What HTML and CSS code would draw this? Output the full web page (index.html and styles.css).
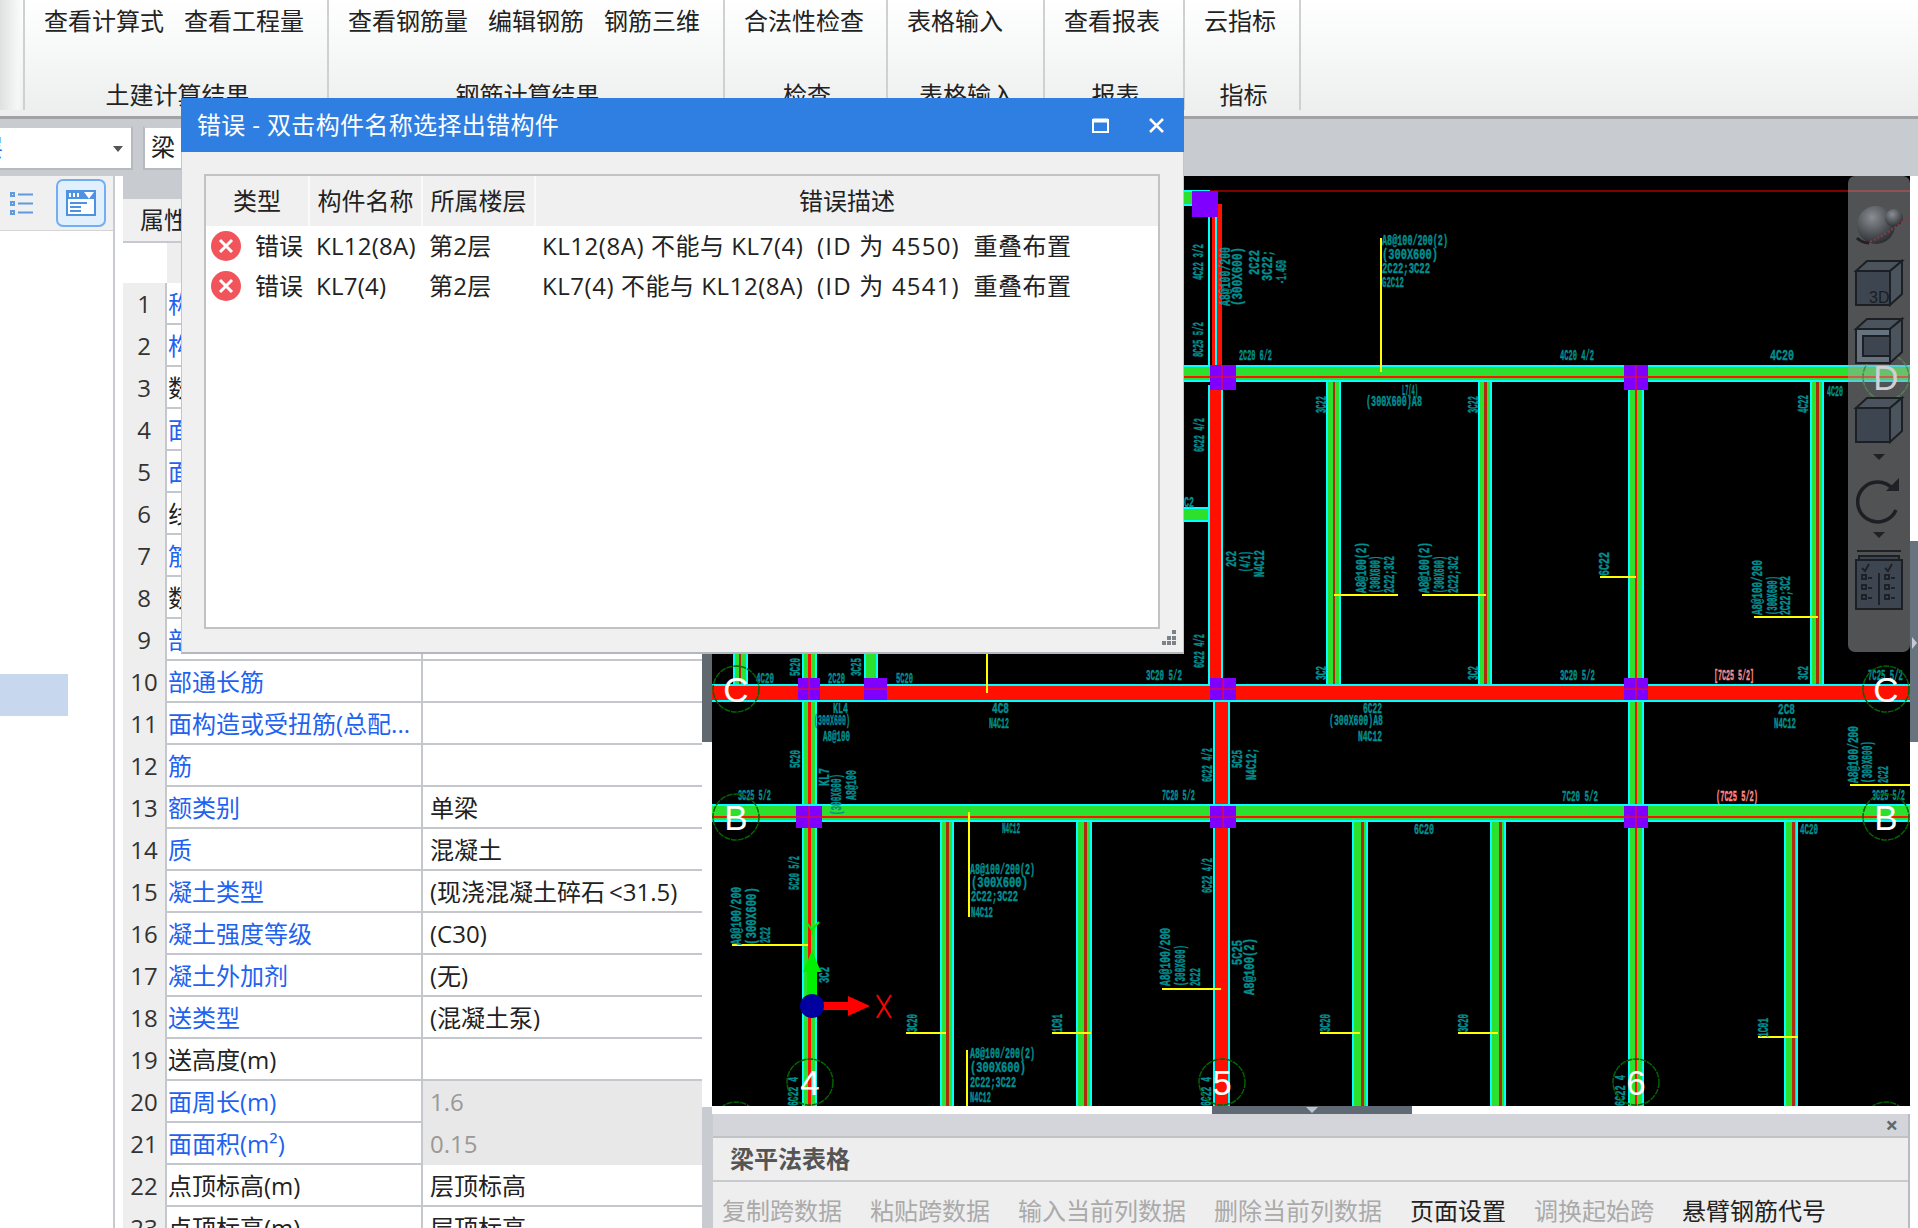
FILE: index.html
```html
<!DOCTYPE html>
<html lang="zh">
<head>
<meta charset="utf-8">
<title>错误 - 双击构件名称选择出错构件</title>
<link rel="stylesheet" href="styles.css">
</head>
<body>
<div class="app">
  <header class="ribbon">
    <div class="rgroup stub"></div>
    <div class="rgroup w1"><div class="rbtns"><span>查看计算式</span><span>查看工程量</span></div><div class="rlabel">土建计算结果</div></div>
    <div class="rgroup w2"><div class="rbtns"><span>查看钢筋量</span><span>编辑钢筋</span><span>钢筋三维</span></div><div class="rlabel">钢筋计算结果</div></div>
    <div class="rgroup w3"><div class="rbtns"><span>合法性检查</span></div><div class="rlabel">检查</div></div>
    <div class="rgroup w4"><div class="rbtns"><span>表格输入</span></div><div class="rlabel">表格输入</div></div>
    <div class="rgroup w5"><div class="rbtns"><span>查看报表</span></div><div class="rlabel">报表</div></div>
    <div class="rgroup w6"><div class="rbtns"><span>云指标</span></div><div class="rlabel">指标</div></div>
    <div class="rgroup rest"></div>
  </header>

  <div class="subbar">
    <div class="combo first"><span class="combo-text">层</span><span class="combo-arrow"></span></div>
    <div class="combo second">梁</div>
  </div>

  <main class="workspace">
    <aside class="tree">
      <div class="tree-tools">
        <svg class="ic-list" width="24" height="24" viewBox="0 0 24 24"><g class="ic-stroke"><rect x="1" y="2" width="3" height="3"/><rect x="1" y="11" width="3" height="3"/><rect x="1" y="20" width="3" height="3"/><path d="M8 3.5h15M8 12.5h15M8 21.5h15"/></g></svg>
        <div class="tool-on">
          <svg width="30" height="26" viewBox="0 0 30 26"><rect class="ic-fill" x="0" y="0" width="30" height="26"/><rect class="ic-white" x="2" y="9" width="26" height="15"/><path class="ic-whiteline" d="M4 3v4M8 3v4M12 3v4M20 3h6l-3 4z"/><path class="ic-blueline" d="M4 13h17M4 17h11M4 21h11"/></svg>
        </div>
      </div>
      <div class="tree-body"><div class="tree-sel"></div></div>
    </aside>
    <div class="tree-gap"></div>

    <section class="props">
      <div class="props-band"></div>
      <div class="props-head">属性</div>
      <div class="row headrow"><div class="num"></div><div class="name"></div><div class="val"></div></div>
      <div class="row"><div class="num">1</div><div class="name link">称</div><div class="val"></div></div>
      <div class="row"><div class="num">2</div><div class="name link">构</div><div class="val"></div></div>
      <div class="row"><div class="num">3</div><div class="name">数</div><div class="val"></div></div>
      <div class="row"><div class="num">4</div><div class="name link">面</div><div class="val"></div></div>
      <div class="row"><div class="num">5</div><div class="name link">面</div><div class="val"></div></div>
      <div class="row"><div class="num">6</div><div class="name">线</div><div class="val"></div></div>
      <div class="row"><div class="num">7</div><div class="name link">筋</div><div class="val"></div></div>
      <div class="row"><div class="num">8</div><div class="name">数</div><div class="val"></div></div>
      <div class="row"><div class="num">9</div><div class="name link">部</div><div class="val"></div></div>
      <div class="row"><div class="num">10</div><div class="name link">部通长筋</div><div class="val"></div></div>
      <div class="row"><div class="num">11</div><div class="name link">面构造或受扭筋(总配...</div><div class="val"></div></div>
      <div class="row"><div class="num">12</div><div class="name link">筋</div><div class="val"></div></div>
      <div class="row"><div class="num">13</div><div class="name link">额类别</div><div class="val">单梁</div></div>
      <div class="row"><div class="num">14</div><div class="name link">质</div><div class="val">混凝土</div></div>
      <div class="row"><div class="num">15</div><div class="name link">凝土类型</div><div class="val">(现浇混凝土碎石&thinsp;&lt;31.5)</div></div>
      <div class="row"><div class="num">16</div><div class="name link">凝土强度等级</div><div class="val">(C30)</div></div>
      <div class="row"><div class="num">17</div><div class="name link">凝土外加剂</div><div class="val">(无)</div></div>
      <div class="row"><div class="num">18</div><div class="name link">送类型</div><div class="val">(混凝土泵)</div></div>
      <div class="row"><div class="num">19</div><div class="name">送高度(m)</div><div class="val"></div></div>
      <div class="row"><div class="num">20</div><div class="name link">面周长(m)</div><div class="val off">1.6</div></div>
      <div class="row"><div class="num">21</div><div class="name link">面面积(m²)</div><div class="val off">0.15</div></div>
      <div class="row"><div class="num">22</div><div class="name">点顶标高(m)</div><div class="val">层顶标高</div></div>
      <div class="row"><div class="num">23</div><div class="name">点顶标高(m)</div><div class="val">层顶标高</div></div>
    </section>

    <div class="vscroll"><div class="vthumb"></div></div>

    <section class="viewcol">
      <div class="viewrow">
        <div class="canvas">
          <svg class="cad" width="1198" height="930" viewBox="712 176 1198 930">
            <!-- top edge -->
            <rect class="dred" x="1210" y="190" width="700" height="2"/>
            <rect class="c" x="1184" y="190" width="26" height="2"/>
            <rect class="g" x="1184" y="192" width="8" height="13"/>
            <rect class="c" x="1184" y="204" width="24" height="2"/>

            <!-- secondary beams -->
            <g>
              <rect class="c" x="1326" y="381" width="15" height="303"/><rect class="g" x="1328" y="381" width="11" height="303"/><rect class="rd" x="1333" y="381" width="2" height="303"/>
              <rect class="c" x="1478" y="381" width="14" height="303"/><rect class="g" x="1480" y="381" width="10" height="303"/><rect class="rd" x="1484" y="381" width="3" height="303"/>
              <rect class="c" x="1810" y="381" width="14" height="303"/><rect class="g" x="1812" y="381" width="10" height="303"/><rect class="rd" x="1816" y="381" width="3" height="303"/>
              <rect class="c" x="733" y="653" width="15" height="31"/><rect class="g" x="735" y="653" width="11" height="31"/><rect class="rd" x="739" y="653" width="2" height="31"/>
              <rect class="c" x="864" y="653" width="14" height="31"/><rect class="g" x="866" y="653" width="10" height="31"/>
              <rect class="c" x="940" y="822" width="14" height="284"/><rect class="g" x="942" y="822" width="10" height="284"/><rect class="rd" x="946" y="822" width="3" height="284"/>
              <rect class="c" x="1076" y="822" width="16" height="284"/><rect class="g" x="1078" y="822" width="12" height="284"/><rect class="rd" x="1084" y="822" width="3" height="284"/>
              <rect class="c" x="1352" y="822" width="16" height="284"/><rect class="g" x="1354" y="822" width="12" height="284"/><rect class="rd" x="1361" y="822" width="3" height="284"/>
              <rect class="c" x="1490" y="822" width="16" height="284"/><rect class="g" x="1492" y="822" width="12" height="284"/><rect class="rd" x="1499" y="822" width="3" height="284"/>
              <rect class="c" x="1784" y="822" width="14" height="284"/><rect class="g" x="1786" y="822" width="10" height="284"/><rect class="rd" x="1792" y="822" width="3" height="284"/>
            </g>

            <!-- axis 4 and 6 -->
            <rect class="c" x="802" y="653" width="15" height="453"/><rect class="g" x="804" y="653" width="11" height="453"/><rect class="r" x="808" y="653" width="3" height="453"/>
            <rect class="c" x="1628" y="385" width="16" height="721"/><rect class="g" x="1630" y="385" width="12" height="721"/><rect class="r" x="1635" y="385" width="2" height="721"/>

            <!-- axis 5 -->
            <rect class="c" x="1208" y="217" width="2" height="148"/><rect class="r" x="1212" y="204" width="3" height="161"/><rect class="c" x="1215" y="217" width="2" height="148"/><rect class="r" x="1217" y="204" width="5" height="161"/>
            <rect class="g" x="1184" y="509" width="26" height="12"/>
            <rect class="c" x="1184" y="507" width="39" height="2"/><rect class="c" x="1184" y="520" width="39" height="2"/>
            <rect class="c" x="1208" y="385" width="15" height="299"/><rect class="r" x="1210" y="385" width="11" height="299"/>
            <rect class="c" x="1213" y="700" width="17" height="406"/><rect class="r" x="1215" y="700" width="13" height="406"/>

            <!-- main horizontals -->
            <rect class="c" x="1184" y="365" width="726" height="17"/><rect class="g" x="1184" y="367" width="726" height="13"/><rect class="r" x="1184" y="376" width="726" height="2"/>
            <rect class="c" x="712" y="684" width="1198" height="18"/><rect class="r" x="712" y="686" width="1198" height="14"/>
            <rect class="c" x="712" y="804" width="1198" height="18"/><rect class="g" x="712" y="806" width="1198" height="14"/><rect class="r" x="712" y="816" width="1198" height="2"/>

            <!-- columns -->
            <rect class="p" x="1192" y="191" width="26" height="26"/>
            <rect class="p" x="1210" y="365" width="26" height="25"/><rect class="p" x="1624" y="365" width="24" height="25"/>
            <rect class="p" x="798" y="678" width="22" height="22"/><rect class="p" x="864" y="678" width="23" height="22"/><rect class="p" x="1210" y="678" width="26" height="22"/><rect class="p" x="1624" y="678" width="24" height="22"/>
            <rect class="p" x="796" y="806" width="26" height="22"/><rect class="p" x="1210" y="806" width="26" height="22"/><rect class="p" x="1624" y="806" width="24" height="22"/>
            <path class="cross" d="M1210 377h26M1222 365v25M1624 377h24M1636 365v25M798 689h22M809 678v22M864 689h23M1210 689h26M1223 678v22M1624 689h24M1636 678v22M796 817h26M809 806v22M1210 817h26M1223 806v22M1624 817h24M1636 806v22"/>

            <!-- leaders -->
            <path class="leader" d="M1381 238V372M1334 595H1398M1422 595H1486M1600 577H1636M1754 617H1818M987 653V693M969 812V917M732 945H808M967 1050V1106M906 1033H946M1052 1033H1091M1162 989H1221M1320 1033H1360M1458 1033H1498M1758 1037H1798M1850 785H1910"/>

            <!-- labels, horizontal -->
            <g class="t">
              <text x="1382" y="245" textLength="66" lengthAdjust="spacingAndGlyphs">A8@100/200(2)</text>
              <text x="1382" y="259" textLength="56" lengthAdjust="spacingAndGlyphs">(300X600)</text>
              <text x="1382" y="273" textLength="48" lengthAdjust="spacingAndGlyphs">2C22;3C22</text>
              <text x="1382" y="287" textLength="22" lengthAdjust="spacingAndGlyphs">G2C12</text>
              <text x="1239" y="360" textLength="33" lengthAdjust="spacingAndGlyphs">2C20 6/2</text>
              <text x="1560" y="360" textLength="34" lengthAdjust="spacingAndGlyphs">4C20 4/2</text>
              <text x="1770" y="360" textLength="24" lengthAdjust="spacingAndGlyphs">4C20</text>
              <text x="1402" y="395" textLength="16" lengthAdjust="spacingAndGlyphs">L7(4)</text>
              <text x="1366" y="406" textLength="56" lengthAdjust="spacingAndGlyphs">(300X600)A8</text>
              <text x="1827" y="396" textLength="16" lengthAdjust="spacingAndGlyphs">4C20</text>
              <text x="1184" y="507" textLength="10" lengthAdjust="spacingAndGlyphs">C2</text>
              <text x="756" y="683" textLength="18" lengthAdjust="spacingAndGlyphs">4C20</text>
              <text x="828" y="683" textLength="17" lengthAdjust="spacingAndGlyphs">2C20</text>
              <text x="896" y="683" textLength="17" lengthAdjust="spacingAndGlyphs">5C20</text>
              <text x="1146" y="680" textLength="36" lengthAdjust="spacingAndGlyphs">3C20 5/2</text>
              <text x="1560" y="680" textLength="35" lengthAdjust="spacingAndGlyphs">3C20 5/2</text>
              <text x="1868" y="680" textLength="35" lengthAdjust="spacingAndGlyphs">7C25 5/2</text>
              <text x="833" y="713" textLength="15" lengthAdjust="spacingAndGlyphs">KL4</text>
              <text x="814" y="725" textLength="36" lengthAdjust="spacingAndGlyphs">(300X600)</text>
              <text x="823" y="741" textLength="27" lengthAdjust="spacingAndGlyphs">A8@100</text>
              <text x="992" y="713" textLength="17" lengthAdjust="spacingAndGlyphs">4C8</text>
              <text x="989" y="728" textLength="20" lengthAdjust="spacingAndGlyphs">N4C12</text>
              <text x="1363" y="713" textLength="19" lengthAdjust="spacingAndGlyphs">6C22</text>
              <text x="1329" y="725" textLength="54" lengthAdjust="spacingAndGlyphs">(300X600)A8</text>
              <text x="1358" y="741" textLength="24" lengthAdjust="spacingAndGlyphs">N4C12</text>
              <text x="1778" y="714" textLength="17" lengthAdjust="spacingAndGlyphs">2C8</text>
              <text x="1774" y="728" textLength="22" lengthAdjust="spacingAndGlyphs">N4C12</text>
              <text x="738" y="800" textLength="33" lengthAdjust="spacingAndGlyphs">3C25 5/2</text>
              <text x="1162" y="800" textLength="33" lengthAdjust="spacingAndGlyphs">7C20 5/2</text>
              <text x="1562" y="801" textLength="36" lengthAdjust="spacingAndGlyphs">7C20 5/2</text>
              <text x="1872" y="800" textLength="33" lengthAdjust="spacingAndGlyphs">3C25 5/2</text>
              <text x="1002" y="833" textLength="18" lengthAdjust="spacingAndGlyphs">N4C12</text>
              <text x="1414" y="834" textLength="20" lengthAdjust="spacingAndGlyphs">6C20</text>
              <text x="1800" y="834" textLength="18" lengthAdjust="spacingAndGlyphs">4C20</text>
              <text x="970" y="874" textLength="65" lengthAdjust="spacingAndGlyphs">A8@100/200(2)</text>
              <text x="971" y="887" textLength="57" lengthAdjust="spacingAndGlyphs">(300X600)</text>
              <text x="971" y="901" textLength="47" lengthAdjust="spacingAndGlyphs">2C22;3C22</text>
              <text x="971" y="917" textLength="22" lengthAdjust="spacingAndGlyphs">N4C12</text>
              <text x="970" y="1058" textLength="65" lengthAdjust="spacingAndGlyphs">A8@100/200(2)</text>
              <text x="970" y="1072" textLength="56" lengthAdjust="spacingAndGlyphs">(300X600)</text>
              <text x="970" y="1087" textLength="46" lengthAdjust="spacingAndGlyphs">2C22;3C22</text>
              <text x="970" y="1102" textLength="21" lengthAdjust="spacingAndGlyphs">N4C12</text>
            </g>
            <g class="tp">
              <text x="1714" y="680" textLength="40" lengthAdjust="spacingAndGlyphs">[7C25 5/2]</text>
              <text x="1716" y="801" textLength="42" lengthAdjust="spacingAndGlyphs">(7C25 5/2)</text>
            </g>

            <!-- labels, rotated -->
            <g class="t">
              <text transform="translate(1203 280) rotate(-90)" textLength="36" lengthAdjust="spacingAndGlyphs">4C22 3/2</text>
              <text transform="translate(1203 357) rotate(-90)" textLength="35" lengthAdjust="spacingAndGlyphs">8C25 5/2</text>
              <text transform="translate(1230 306) rotate(-90)" textLength="59" lengthAdjust="spacingAndGlyphs">A8@100/200</text>
              <text transform="translate(1242 306) rotate(-90)" textLength="59" lengthAdjust="spacingAndGlyphs">(300X600)</text>
              <text transform="translate(1259 275) rotate(-90)" textLength="25" lengthAdjust="spacingAndGlyphs">2C22</text>
              <text transform="translate(1272 281) rotate(-90)" textLength="31" lengthAdjust="spacingAndGlyphs">3C22;</text>
              <text transform="translate(1286 284) rotate(-90)" textLength="24" lengthAdjust="spacingAndGlyphs">-1.450</text>
              <text transform="translate(1326 413) rotate(-90)" textLength="17" lengthAdjust="spacingAndGlyphs">3C22</text>
              <text transform="translate(1478 413) rotate(-90)" textLength="17" lengthAdjust="spacingAndGlyphs">3C22</text>
              <text transform="translate(1808 413) rotate(-90)" textLength="18" lengthAdjust="spacingAndGlyphs">4C22</text>
              <text transform="translate(1204 452) rotate(-90)" textLength="34" lengthAdjust="spacingAndGlyphs">6C22 4/2</text>
              <text transform="translate(1204 668) rotate(-90)" textLength="34" lengthAdjust="spacingAndGlyphs">6C22 4/2</text>
              <text transform="translate(1236 567) rotate(-90)" textLength="16" lengthAdjust="spacingAndGlyphs">2C2</text>
              <text transform="translate(1250 572) rotate(-90)" textLength="21" lengthAdjust="spacingAndGlyphs">(4/1)</text>
              <text transform="translate(1264 577) rotate(-90)" textLength="27" lengthAdjust="spacingAndGlyphs">N4C12</text>
              <text transform="translate(1366 593) rotate(-90)" textLength="51" lengthAdjust="spacingAndGlyphs">A8@100(2)</text>
              <text transform="translate(1380 593) rotate(-90)" textLength="37" lengthAdjust="spacingAndGlyphs">(300X600)</text>
              <text transform="translate(1394 593) rotate(-90)" textLength="37" lengthAdjust="spacingAndGlyphs">2C22;3C2</text>
              <text transform="translate(1429 593) rotate(-90)" textLength="51" lengthAdjust="spacingAndGlyphs">A8@100(2)</text>
              <text transform="translate(1444 593) rotate(-90)" textLength="37" lengthAdjust="spacingAndGlyphs">(300X600)</text>
              <text transform="translate(1458 593) rotate(-90)" textLength="37" lengthAdjust="spacingAndGlyphs">2C22;3C2</text>
              <text transform="translate(1609 576) rotate(-90)" textLength="24" lengthAdjust="spacingAndGlyphs">6C22</text>
              <text transform="translate(1762 615) rotate(-90)" textLength="55" lengthAdjust="spacingAndGlyphs">A8@100/200</text>
              <text transform="translate(1777 615) rotate(-90)" textLength="39" lengthAdjust="spacingAndGlyphs">(300X600)</text>
              <text transform="translate(1790 615) rotate(-90)" textLength="39" lengthAdjust="spacingAndGlyphs">2C22;3C2</text>
              <text transform="translate(1326 680) rotate(-90)" textLength="14" lengthAdjust="spacingAndGlyphs">3C2</text>
              <text transform="translate(1478 680) rotate(-90)" textLength="14" lengthAdjust="spacingAndGlyphs">3C2</text>
              <text transform="translate(1808 680) rotate(-90)" textLength="14" lengthAdjust="spacingAndGlyphs">3C2</text>
              <text transform="translate(800 676) rotate(-90)" textLength="18" lengthAdjust="spacingAndGlyphs">5C20</text>
              <text transform="translate(861 676) rotate(-90)" textLength="18" lengthAdjust="spacingAndGlyphs">3C25</text>
              <text transform="translate(800 768) rotate(-90)" textLength="18" lengthAdjust="spacingAndGlyphs">5C20</text>
              <text transform="translate(829 786) rotate(-90)" textLength="18" lengthAdjust="spacingAndGlyphs">KL7</text>
              <text transform="translate(841 815) rotate(-90)" textLength="41" lengthAdjust="spacingAndGlyphs">(300X600)</text>
              <text transform="translate(856 800) rotate(-90)" textLength="30" lengthAdjust="spacingAndGlyphs">A8@100</text>
              <text transform="translate(1212 782) rotate(-90)" textLength="34" lengthAdjust="spacingAndGlyphs">6C22 4/2</text>
              <text transform="translate(1242 768) rotate(-90)" textLength="18" lengthAdjust="spacingAndGlyphs">5C25</text>
              <text transform="translate(1256 780) rotate(-90)" textLength="32" lengthAdjust="spacingAndGlyphs">N4C12;</text>
              <text transform="translate(799 890) rotate(-90)" textLength="34" lengthAdjust="spacingAndGlyphs">5C20 5/2</text>
              <text transform="translate(741 945) rotate(-90)" textLength="58" lengthAdjust="spacingAndGlyphs">A8@100/200</text>
              <text transform="translate(756 945) rotate(-90)" textLength="58" lengthAdjust="spacingAndGlyphs">(300X600)</text>
              <text transform="translate(770 943) rotate(-90)" textLength="16" lengthAdjust="spacingAndGlyphs">2C22</text>
              <text transform="translate(1212 893) rotate(-90)" textLength="35" lengthAdjust="spacingAndGlyphs">6C22 4/2</text>
              <text transform="translate(1170 986) rotate(-90)" textLength="58" lengthAdjust="spacingAndGlyphs">A8@100/200</text>
              <text transform="translate(1185 986) rotate(-90)" textLength="41" lengthAdjust="spacingAndGlyphs">(300X600)</text>
              <text transform="translate(1200 986) rotate(-90)" textLength="18" lengthAdjust="spacingAndGlyphs">2C22</text>
              <text transform="translate(1242 965) rotate(-90)" textLength="25" lengthAdjust="spacingAndGlyphs">5C25</text>
              <text transform="translate(1254 995) rotate(-90)" textLength="57" lengthAdjust="spacingAndGlyphs">A8@100(2)</text>
              <text transform="translate(829 983) rotate(-90)" textLength="16" lengthAdjust="spacingAndGlyphs">3C2</text>
              <text transform="translate(917 1032) rotate(-90)" textLength="18" lengthAdjust="spacingAndGlyphs">3C20</text>
              <text transform="translate(1062 1032) rotate(-90)" textLength="18" lengthAdjust="spacingAndGlyphs">1C01</text>
              <text transform="translate(1330 1032) rotate(-90)" textLength="18" lengthAdjust="spacingAndGlyphs">3C20</text>
              <text transform="translate(1468 1032) rotate(-90)" textLength="18" lengthAdjust="spacingAndGlyphs">3C20</text>
              <text transform="translate(1768 1037) rotate(-90)" textLength="19" lengthAdjust="spacingAndGlyphs">1C01</text>
              <text transform="translate(798 1106) rotate(-90)" textLength="29" lengthAdjust="spacingAndGlyphs">6C22 4</text>
              <text transform="translate(1211 1106) rotate(-90)" textLength="29" lengthAdjust="spacingAndGlyphs">6C22 4</text>
              <text transform="translate(1625 1106) rotate(-90)" textLength="31" lengthAdjust="spacingAndGlyphs">6C22 4</text>
              <text transform="translate(1858 783) rotate(-90)" textLength="57" lengthAdjust="spacingAndGlyphs">A8@100/200</text>
              <text transform="translate(1872 783) rotate(-90)" textLength="42" lengthAdjust="spacingAndGlyphs">(300X600)</text>
              <text transform="translate(1888 783) rotate(-90)" textLength="17" lengthAdjust="spacingAndGlyphs">2C22</text>
            </g>

            <!-- axis bubbles -->
            <g class="bubble">
              <circle cx="736" cy="689" r="23"/><circle cx="1886" cy="689" r="23"/>
              <circle cx="736" cy="817" r="23"/><circle cx="1886" cy="817" r="23"/>
              <circle cx="1886" cy="377" r="23"/>
              <circle cx="810" cy="1082" r="23"/><circle cx="1222" cy="1082" r="23"/><circle cx="1636" cy="1082" r="23"/>
              <circle cx="736" cy="1125" r="23"/><circle cx="1886" cy="1125" r="23"/>
            </g>
            <g class="axis-t">
              <text x="736" y="702">C</text><text x="1886" y="702">C</text>
              <text x="736" y="830">B</text><text x="1886" y="830">B</text>
              <text x="1886" y="390">D</text>
              <text x="810" y="1095">4</text><text x="1222" y="1095">5</text><text x="1636" y="1095">6</text>
            </g>

            <!-- UCS -->
            <path class="ucs-g" d="M807 1000V972H803L812 950 821 972H817V1000Z"/>
            <path class="ucs-gl" d="M807 923L812 930 819 922M812 930V935"/>
            <path class="ucs-r" d="M822 1002H848V996L870 1006 848 1016V1010H822Z"/>
            <ellipse class="ucs-b" cx="812" cy="1006" rx="12" ry="12"/>
            <path class="ucs-rl" d="M877 995L891 1018M891 995L877 1018"/>
          </svg>

          <div class="cube-panel">
            <svg width="62" height="476" viewBox="1847 176 62 476">
              <defs>
                <radialGradient id="sph" cx="40%" cy="30%" r="70%"><stop offset="0" stop-color="#8a8d92"/><stop offset="1" stop-color="#2c2f33"/></radialGradient>
              </defs>
              <circle cx="1875" cy="225" r="19" fill="url(#sph)"/>
              <circle cx="1893" cy="218" r="9" fill="url(#sph)"/>
              <path class="sph-ring" d="M1862 245C1875 240 1895 228 1909 216"/>
              <path class="sph-shadow" d="M1856 238C1859 241 1863 243 1868 243"/>
              <g class="cube">
                <path class="face" d="M1855 271H1889V305H1855Z"/><path class="side" d="M1855 271L1866 261H1901L1889 271Z"/><path class="side" d="M1889 271L1901 261V294L1889 305Z"/>
                <text class="cube-t" x="1868" y="303">3D</text>
                <path class="inner" d="M1855 329H1889V363H1855Z"/><path class="side" d="M1855 329L1866 319H1901L1889 329Z"/><path class="side" d="M1889 329L1901 319V352L1889 363Z"/>
                <path class="face" d="M1862 336H1889V356H1862Z"/>
                <path class="face" d="M1855 408H1889V442H1855Z"/><path class="side" d="M1855 408L1866 398H1901L1889 408Z"/><path class="side" d="M1889 408L1901 398V431L1889 442Z"/>
              </g>
              <path class="tri" d="M1872 454H1884L1878 460Z"/>
              <path class="rot" d="M1892 489A20 20 0 1 0 1895 510"/>
              <path class="tri" d="M1885 491H1898V478Z"/>
              <path class="tri" d="M1872 532H1884L1878 538Z"/>
              <path class="sep" d="M1856 551H1900"/>
              <g class="check">
                <path class="checkbox" d="M1855 560H1901V609H1855ZM1858 556H1898V560H1858Z"/>
                <path class="sep" d="M1878 573V605M1861 568L1864 571 1868 564M1884 568L1887 571 1891 564M1867 578H1871M1867 588H1871M1867 598H1871M1890 578H1894M1890 588H1894M1890 598H1894"/>
                <path class="sep" d="M1861 575h4v4h-4zM1861 585h4v4h-4zM1861 595h4v4h-4zM1884 575h4v4h-4zM1884 585h4v4h-4zM1884 595h4v4h-4z"/>
              </g>
            </svg>
          </div>
        </div>
        <div class="rscroll"><div class="rthumb"><span class="rarrow"></span></div></div>
      </div>
      <div class="hscroll"><div class="hthumb"><span class="harrow"></span></div></div>
      <div class="bottom">
        <div class="bottom-head"><span class="bottom-x">×</span></div>
        <div class="bottom-title">梁平法表格</div>
        <div class="bottom-tools">
          <span class="off-t">复制跨数据</span><span class="off-t">粘贴跨数据</span><span class="off-t">输入当前列数据</span><span class="off-t">删除当前列数据</span><span>页面设置</span><span class="off-t">调换起始跨</span><span>悬臂钢筋代号</span>
        </div>
      </div>
    </section>
  </main>

  <div class="dialog">
    <div class="dlg-title">
      <span class="dlg-text">错误 - 双击构件名称选择出错构件</span>
      <svg class="dlg-max" width="17" height="15" viewBox="0 0 17 15"><path d="M1 1.5H16M1 3.5H16M1 1V14H16V1" /></svg>
      <svg class="dlg-close" width="15" height="15" viewBox="0 0 15 15"><path d="M1 1L14 14M14 1L1 14"/></svg>
    </div>
    <div class="dlg-body">
      <div class="err-table">
        <div class="err-head">
          <div class="eh c1">类型</div><div class="eh c2">构件名称</div><div class="eh c3">所属楼层</div><div class="eh c4">错误描述</div>
        </div>
        <div class="err-row">
          <div class="c1 ecell"><svg class="err-ic" width="30" height="30" viewBox="0 0 30 30"><circle cx="15" cy="15" r="15"/><path d="M9 9L21 21M21 9L9 21"/></svg>错误</div>
          <div class="c2 ecell">KL12(8A)</div><div class="c3 ecell">第2层</div><div class="c4 ecell">KL12(8A) 不能与 KL7(4)&nbsp; <span class="idt">(ID 为 4550)</span>&nbsp; 重叠布置</div>
        </div>
        <div class="err-row">
          <div class="c1 ecell"><svg class="err-ic" width="30" height="30" viewBox="0 0 30 30"><circle cx="15" cy="15" r="15"/><path d="M9 9L21 21M21 9L9 21"/></svg>错误</div>
          <div class="c2 ecell">KL7(4)</div><div class="c3 ecell">第2层</div><div class="c4 ecell">KL7(4) 不能与 KL12(8A)&nbsp; <span class="idt">(ID 为 4541)</span>&nbsp; 重叠布置</div>
        </div>
      </div>
      <svg class="grip" width="16" height="16" viewBox="0 0 16 16"><path d="M11 0h4v4h-4zM6 6h4v4H6zM11 6h4v4h-4zM1 11h4v4H1zM6 11h4v4H6zM11 11h4v4h-4z"/></svg>
    </div>
  </div>
</div>
</body>
</html>
```

FILE: styles.css
```css
* { box-sizing: border-box; }
html, body { margin: 0; padding: 0; }
body {
  width: 1918px;
  height: 1228px;
  overflow: hidden;
  background: #c8cbd0;
  font-family: "Open Sans", "Noto Sans CJK SC", sans-serif;
  font-size: 24px;
  color: #222;
}
.app { position: relative; width: 1918px; height: 1228px; overflow: hidden; }

/* ribbon */
.ribbon {
  display: flex;
  height: 119px;
  border-bottom: 3px solid #a0a2a6;
  background: linear-gradient(#ffffff, #eceeee);
}
.rgroup {
  display: flex;
  flex-direction: column;
  height: 110px;
  padding-left: 19px;
  border-left: 2px solid #cfd0d0;
}
.stub { width: 23px; padding: 0; border: 0; background: linear-gradient(90deg, #dfe1e1, #f6f7f7 18px, transparent); }
.w1 { width: 304px; }
.w2 { width: 396px; }
.w3 { width: 163px; }
.w4 { width: 157px; }
.w5 { width: 140px; }
.w6 { width: 116px; }
.rest { flex: 1; padding: 0; }
.rbtns { display: flex; gap: 20px; height: 42px; line-height: 42px; white-space: nowrap; }
.rlabel { margin-top: 33px; margin-left: -16px; height: 40px; line-height: 40px; text-align: center; }

/* sub bar */
.subbar {
  display: flex;
  gap: 10px;
  height: 57px;
  padding-top: 7px;
  background: #c8cbd0;
}
.combo {
  position: relative;
  height: 44px;
  background: #fff;
  border: 2px solid #b6b9bd;
  border-top-color: #c8cbd0;
  line-height: 38px;
  overflow: hidden;
}
.combo.first { width: 133px; border-left: 0; }
.combo.second { width: 60px; padding-left: 6px; }
.combo-text { display: block; margin-left: -21px; color: #1f62f0; }
.combo-arrow {
  position: absolute;
  right: 8px;
  top: 18px;
  border: 5px solid transparent;
  border-top: 6px solid #555;
  border-bottom: 0;
}

/* workspace */
.workspace { display: flex; height: 1052px; }
.tree { width: 115px; background: #fff; border-right: 2px solid #c8cbd0; flex: none; }
.tree-tools {
  display: flex;
  align-items: center;
  gap: 22px;
  height: 55px;
  padding-left: 10px;
  background: #f0f0f0;
  border-bottom: 1px solid #d4d4d4;
}
.tool-on {
  display: flex;
  align-items: center;
  justify-content: center;
  width: 50px;
  height: 48px;
  background: #e2effc;
  border: 2px solid #72aff2;
  border-radius: 7px;
}
.ic-stroke { fill: none; stroke: #5d9be0; stroke-width: 2; }
.ic-fill { fill: #4d93e2; }
.ic-white { fill: #fff; }
.ic-whiteline { fill: #fff; stroke: #fff; stroke-width: 2; }
.ic-blueline { fill: none; stroke: #4d93e2; stroke-width: 2; }
.tree-body { padding-top: 443px; }
.tree-sel { width: 68px; height: 42px; background: #c6d7ee; }
.tree-gap { width: 8px; background: #fff; flex: none; }

/* properties */
.props { width: 579px; flex: none; background: #fff; overflow: hidden; }
.props-band { height: 23px; background: #c8cbd0; }
.props-head {
  height: 44px;
  padding-left: 17px;
  line-height: 42px;
  background: #f0f0f0;
  border-bottom: 2px solid #c6c9ce;
}
.row {
  display: grid;
  grid-template-columns: 44px 256px 1fr;
  height: 42px;
  line-height: 42px;
  border-bottom: 2px solid #c4c8cd;
  white-space: nowrap;
}
.row:last-child { border-bottom: 0; }
.headrow { height: 40px; background: #eee; border-bottom: 0; }
.headrow .num { background: #fff; border-right: 0; }
.headrow .name, .headrow .val { border: 0; }
.num { background: #eeeeee; text-align: center; border-right: 2px solid #c4c8cd; color: #333; }
.name { padding-left: 1px; border-right: 2px solid #c4c8cd; overflow: hidden; }
.link { color: #1f62f0; }
.val { padding-left: 7px; }
.val.off { background: #e8e8e8; color: #999; }

/* scrollbars */
.vscroll { width: 10px; flex: none; background: linear-gradient(#fff, #fff) 0 0 / 100% 931px no-repeat, #c8cbd0; }
.vthumb { height: 566px; background: #606870; }
.viewcol { flex: 1; background: #fff; min-width: 0; }
.viewrow { display: flex; height: 930px; }
.canvas { position: relative; width: 1198px; height: 930px; background: #000; overflow: hidden; flex: none; }
.cad { display: block; }
.rscroll { flex: 1; background: #fff; padding-top: 365px; }
.rthumb { display: flex; align-items: center; height: 201px; background: #687380; }
.rarrow { margin: 0 0 -2px 2px; border: 6px solid transparent; border-left: 5px solid #c8ccd2; border-right: 0; }
.hscroll { height: 8px; background: #fff; padding-left: 500px; }
.hthumb { display: flex; justify-content: center; width: 200px; height: 8px; background: #606a74; }
.harrow { margin-top: 1px; border: 6px solid transparent; border-top: 6px solid #c0c4c8; border-bottom: 0; }

/* bottom panel */
.bottom { width: 1198px; height: 114px; background: #eee; border-right: 2px solid #b8bbc0; overflow: hidden; border-left: 1px solid #c8cbd0; }
.bottom-head {
  display: flex;
  justify-content: flex-end;
  height: 24px;
  padding-right: 10px;
  background: #d3d5da;
  border-bottom: 2px solid #c0c2c6;
}
.bottom-x { font-size: 22px; line-height: 20px; font-weight: 700; color: #666; }
.bottom-title {
  height: 44px;
  padding-left: 17px;
  line-height: 42px;
  font-weight: 700;
  color: #555;
  border-bottom: 2px solid #c8cacd;
}
.bottom-tools { display: flex; gap: 28px; padding-left: 9px; line-height: 58px; white-space: nowrap; }
.off-t { color: #aaa; }

/* cad */
.c { fill: #00ffff; }
.g { fill: #2ee02e; }
.r { fill: #ff1000; }
.rd { fill: #b02a10; }
.dred { fill: #800000; }
.p { fill: #8000ff; }
.cross { fill: none; stroke: #ff1000; stroke-width: 1; }
.leader { fill: none; stroke: #ffff00; stroke-width: 2; }
.t text, .tp text { font-family: "Liberation Mono", monospace; font-size: 14px; font-weight: 700; stroke-width: 0.4px; }
.t { fill: #009092; stroke: #009092; }
.tp { fill: #ff8a8a; stroke: #ff8a8a; }
.bubble circle { fill: none; stroke: #006400; stroke-width: 1.5; stroke-dasharray: 6 1; }
.axis-t text { font-family: "Liberation Sans", sans-serif; font-size: 35px; fill: #fff; text-anchor: middle; }
.ucs-g { fill: #00f000; }
.ucs-gl { fill: none; stroke: #00f000; stroke-width: 2; }
.ucs-r { fill: #ff0000; }
.ucs-rl { fill: none; stroke: #ff0000; stroke-width: 2; }
.ucs-b { fill: #0000a0; }

/* view cube panel */
.cube-panel {
  position: absolute;
  right: 0;
  top: 0;
  width: 62px;
  height: 476px;
  background: rgba(160, 164, 168, 0.5);
  border-radius: 7px;
}
.cube-panel svg { display: block; }
.face { fill: #3d4650; }
.inner { fill: #66727e; }
.side { fill: #4b545d; }
.cube path { stroke: #1c2024; stroke-width: 2; }
.cube-t { font-family: "Liberation Sans", sans-serif; font-size: 16px; fill: #1a1e22; }
.sph-ring { fill: none; stroke: #8a3a44; stroke-width: 2; stroke-dasharray: 2 2; }
.sph-shadow { fill: none; stroke: #222; stroke-width: 3; }
.tri { fill: #1e2226; }
.rot { fill: none; stroke: #1c2024; stroke-width: 3.5; }
.sep { fill: none; stroke: #1e2226; stroke-width: 2; }
.checkbox { fill: #3d4650; stroke: #1c2024; stroke-width: 2; }

/* dialog */
.dialog {
  position: absolute;
  left: 181px;
  top: 98px;
  width: 1003px;
  height: 556px;
  background: #f0f0f0;
  border: 1px solid #c2c6ca;
  border-top: 0;
  border-bottom: 2px solid #b4b8bc;
}
.dlg-title {
  display: flex;
  align-items: center;
  height: 54px;
  margin: 0 -1px;
  padding: 0 0 3px 16px;
  background: #2f7fe2;
  color: #fff;
}
.dlg-text { flex: 1; letter-spacing: 0.35px; }
.dlg-max { margin-right: 40px; margin-top: 3px; fill: none; stroke: #fff; stroke-width: 2; }
.dlg-close { margin-right: 20px; margin-top: 3px; fill: none; stroke: #fff; stroke-width: 2.5; }
.dlg-body { position: relative; height: 500px; padding: 22px 23px 0 22px; }
.err-table { height: 455px; background: #fff; border: 2px solid #c2c2c2; }
.err-head { display: flex; height: 50px; gap: 0; background: #f0f0f0; }
.eh { text-align: center; line-height: 50px; border-right: 2px solid #fafafa; }
.eh.c4 { border-right: 0; }
.c1 { width: 104px; flex: none; }
.c2 { width: 113px; flex: none; }
.c3 { width: 113px; flex: none; }
.c4 { flex: 1; letter-spacing: 0.55px; }
.idt { letter-spacing: 1.2px; }
.eh.c4 { letter-spacing: 0; }
.err-row { display: flex; height: 40px; line-height: 40px; white-space: nowrap; }
.ecell { padding-left: 6px; }
.c2.ecell, .c3.ecell { letter-spacing: 0.25px; }
.c1.ecell { display: flex; align-items: center; gap: 14px; padding-left: 5px; }
.err-ic circle { fill: #f2545b; }
.err-ic path { fill: none; stroke: #fff; stroke-width: 3; }
.grip { position: absolute; right: 6px; bottom: 6px; fill: #7c8288; }
```
